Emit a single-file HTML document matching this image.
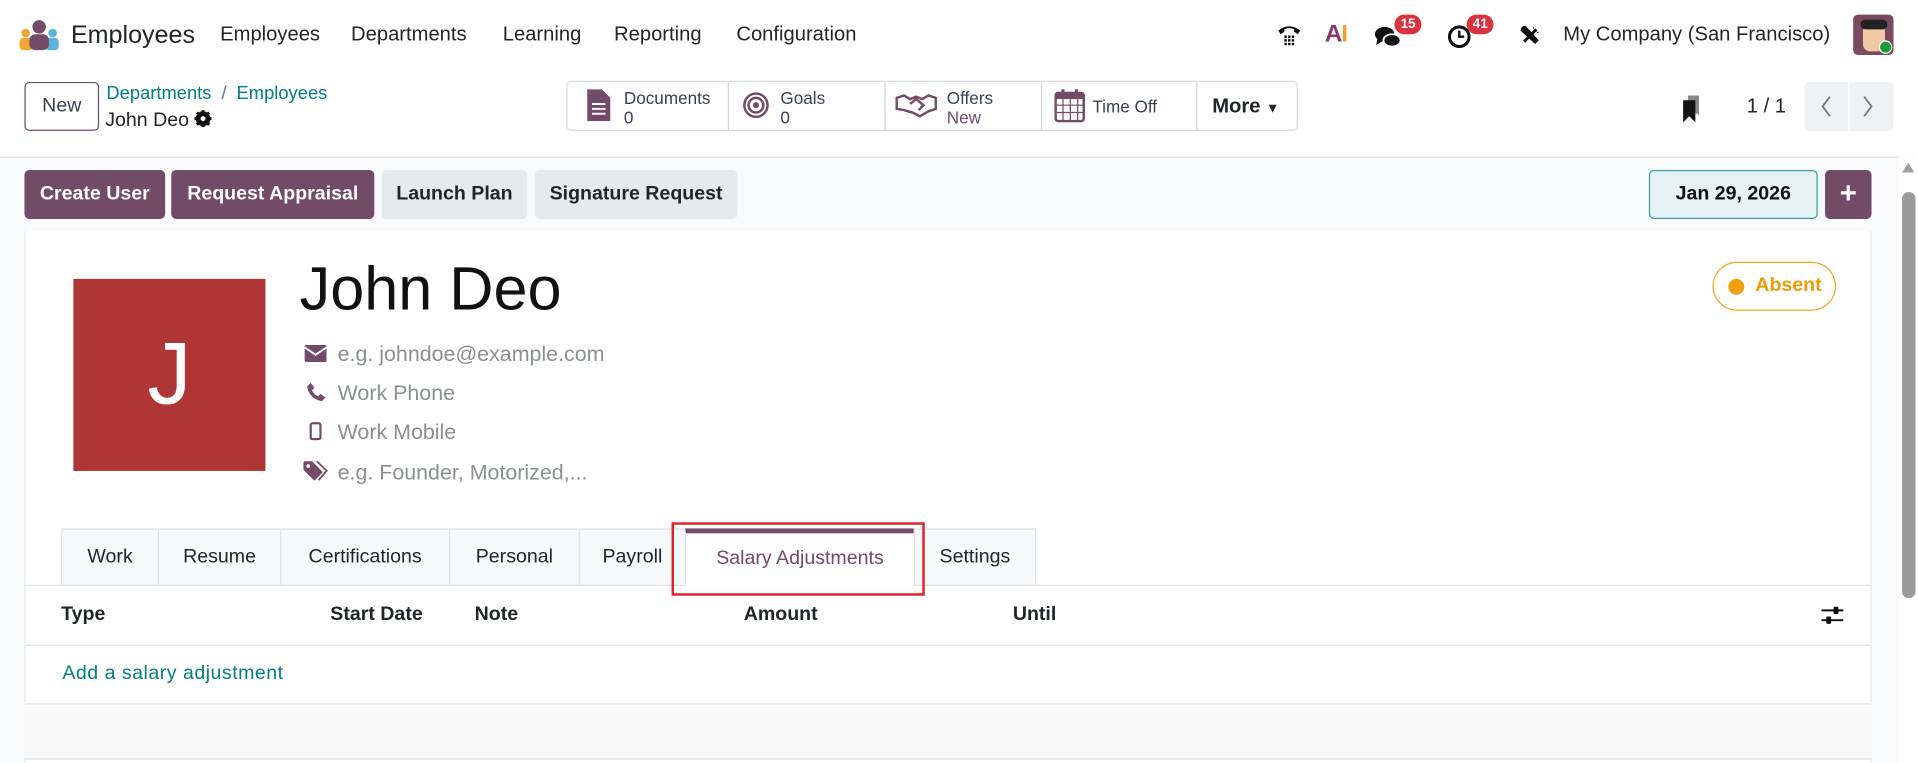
<!DOCTYPE html>
<html><head><meta charset="utf-8"><style>
*{box-sizing:border-box;margin:0;padding:0}
html,body{width:1918px;height:763px;overflow:hidden;background:#fff;font-family:"Liberation Sans",sans-serif;color:#212529}
#w{width:1568px;height:624px;transform:scale(1.22321);transform-origin:0 0;position:relative}
.a{position:absolute;white-space:nowrap}
.nav{font-size:16.5px;top:19px}
.badge{position:absolute;background:#d9333f;color:#fff;font-size:11px;border-radius:10px;padding:2px 5px;font-weight:bold}
.sb{position:absolute;top:66px;height:41px;border:1px solid #d8dadd;background:#fff;font-size:14px;line-height:16px;color:#374151}
.btn{position:absolute;top:139px;height:40px;border-radius:4px;font-size:16px;font-weight:bold;line-height:40px;text-align:center}
.p{background:#714b67;color:#fff}.g{background:#e7e9ed;color:#212529}
.tab{position:absolute;top:432px;height:47px;border:1px solid #dee2e6;background:#f8f9fa;font-size:16px;line-height:46px;text-align:center;color:#212529}
.fld{position:absolute;left:276px;font-size:17.5px;color:#8a8f94}
.th{position:absolute;top:494px;font-size:16px;font-weight:bold}
</style></head><body><div id="w">
<svg class="a" style="left:15px;top:16px" width="34" height="26" viewBox="0 0 34 26"><circle cx="17" cy="6" r="5.5" fill="#714b67"/><circle cx="6" cy="11" r="3.5" fill="#f3a62f"/><circle cx="28" cy="11" r="3.5" fill="#5ab4de"/><rect x="1" y="15" width="11" height="10" rx="3" fill="#f3a62f"/><rect x="22" y="15" width="11" height="10" rx="3" fill="#5ab4de"/><rect x="9" y="12" width="16" height="13" rx="5" fill="#714b67"/></svg>
<div class="a" style="left:58px;top:17px;font-size:20.5px">Employees</div>
<div class="a nav" style="left:180px">Employees</div>
<div class="a nav" style="left:287px">Departments</div>
<div class="a nav" style="left:411px">Learning</div>
<div class="a nav" style="left:502px">Reporting</div>
<div class="a nav" style="left:602px">Configuration</div>
<svg class="a" style="left:1043px;top:18px" width="22" height="22" viewBox="0 0 22 22"><path d="M2 7Q11 0 20 7L18 10 15 8V6Q11 4 7 6V8L4 10Z" fill="#111"/><g fill="#111"><rect x="7" y="11" width="2" height="2"/><rect x="10" y="11" width="2" height="2"/><rect x="13" y="11" width="2" height="2"/><rect x="7" y="14" width="2" height="2"/><rect x="10" y="14" width="2" height="2"/><rect x="13" y="14" width="2" height="2"/><rect x="7" y="17" width="2" height="2"/><rect x="10" y="17" width="2" height="2"/><rect x="13" y="17" width="2" height="2"/></g></svg>
<div class="a" style="left:1083px;top:17px;font-size:20px;font-weight:bold;color:#c0622a;letter-spacing:-1px"><span style="color:#8a3a6a">A</span><span style="color:#f0a030">I</span></div>
<svg class="a" style="left:1123px;top:20px" width="24" height="20" viewBox="0 0 24 20"><ellipse cx="9" cy="8" rx="8" ry="6" fill="#111"/><path d="M3 12L2 17 8 13Z" fill="#111"/><ellipse cx="15" cy="13" rx="7" ry="5" fill="#111" stroke="#fff" stroke-width="1.5"/></svg>
<div class="badge" style="left:1140px;top:12px">15</div>
<svg class="a" style="left:1183px;top:19px" width="22" height="22" viewBox="0 0 22 22"><circle cx="10" cy="11" r="8" fill="none" stroke="#111" stroke-width="2.5"/><path d="M10 6V11H14" stroke="#111" stroke-width="2" fill="none"/></svg>
<div class="badge" style="left:1199px;top:12px">41</div>
<svg class="a" style="left:1241px;top:19px" width="20" height="20" viewBox="0 0 20 20"><path d="M5 15L15 5" stroke="#111" stroke-width="2.4"/><path d="M13 2A4 4 0 0 0 18 7L16 8 12 4Z" fill="#111"/><path d="M3 3L6 2 17 14 14 17 2 6Z" fill="#111"/></svg>
<div class="a" style="left:1278px;top:19px;font-size:16.5px">My Company (San Francisco)</div>
<div class="a" style="left:1515px;top:12px;width:33px;height:33px;border-radius:4px;background:#7a4a5e;overflow:hidden"><div style="position:absolute;left:8px;top:8px;width:18px;height:22px;background:#f1c9a5;border-radius:6px"></div><div style="position:absolute;left:6px;top:4px;width:22px;height:8px;background:#222;border-radius:4px"></div></div>
<div class="a" style="left:1536px;top:33px;width:11px;height:11px;border-radius:50%;background:#1a9a3a;border:1.5px solid #fff"></div>
<div class="a" style="left:20px;top:67px;width:61px;height:40px;border:1px solid #714b67;border-radius:4px;font-size:16px;line-height:38px;text-align:center;color:#374151">New</div>
<div class="a" style="left:87px;top:68px;font-size:15px;color:#017e84">Departments <span style="color:#6c757d;margin:0 4px">/</span> Employees</div>
<div class="a" style="left:86px;top:90px;font-size:16px">John Deo <svg width="14" height="14" viewBox="0 0 14 14" style="vertical-align:-1px"><circle cx="7" cy="7" r="4.5" fill="none" stroke="#111" stroke-width="3"/><path d="M7 0V14M0 7H14M2 2L12 12M12 2L2 12" stroke="#111" stroke-width="2.5"/><circle cx="7" cy="7" r="2" fill="#fff"/></svg></div>
<div class="sb" style="left:463px;width:133px;border-radius:4px 0 0 4px"><svg class="a" style="left:16px;top:6px" width="19" height="26" viewBox="0 0 19 26"><path d="M0 0H12L19 7V26H0Z" fill="#714b67"/><path d="M4 12H15M4 16H15M4 20H15" stroke="#fff" stroke-width="1.6"/></svg><div class="a" style="left:46px;top:5px">Documents<br>0</div></div>
<div class="sb" style="left:595px;width:129px"><svg class="a" style="left:11px;top:8px" width="22" height="22" viewBox="0 0 22 22"><circle cx="11" cy="11" r="9.5" fill="none" stroke="#714b67" stroke-width="2"/><circle cx="11" cy="11" r="6" fill="none" stroke="#714b67" stroke-width="2"/><circle cx="11" cy="11" r="2.5" fill="#714b67"/></svg><div class="a" style="left:42px;top:5px">Goals<br>0</div></div>
<div class="sb" style="left:723px;width:129px"><svg class="a" style="left:8px;top:9px" width="34" height="20" viewBox="0 0 34 20"><path d="M1 4L7 2 12 5 17 3 22 5 27 2 33 4V13L27 15 20 19 14 16 7 14 1 13Z" fill="none" stroke="#714b67" stroke-width="2"/><path d="M12 9L17 5 23 10 19 14" fill="none" stroke="#714b67" stroke-width="2"/></svg><div class="a" style="left:50px;top:5px">Offers<br><span style="color:#714b67">New</span></div></div>
<div class="sb" style="left:851px;width:128px"><svg class="a" style="left:10px;top:5px" width="25" height="28" viewBox="0 0 25 28"><rect x="1" y="4" width="23" height="23" rx="2" fill="none" stroke="#714b67" stroke-width="2"/><rect x="1" y="4" width="23" height="5" fill="#714b67"/><path d="M7 1V6M18 1V6" stroke="#714b67" stroke-width="2.5"/><path d="M1 14H24M1 20H24M7 9V27M13 9V27M19 9V27" stroke="#714b67" stroke-width="1"/></svg><div class="a" style="left:41px;top:12px">Time Off</div></div>
<div class="sb" style="left:978px;width:83px;border-radius:0 4px 4px 0;font-size:16.5px;font-weight:bold;color:#212529"><div class="a" style="left:12px;top:12px">More <span style="font-size:11px">▼</span></div></div>
<svg class="a" style="left:1375px;top:78px" width="18" height="22" viewBox="0 0 18 22"><path d="M5 0H14V16L5 11Z" fill="#888"/><path d="M1 4H11V22L6 17 1 22Z" fill="#111"/></svg>
<div class="a" style="left:1428px;top:78px;font-size:16.5px">1 / 1</div>
<div class="a" style="left:1475px;top:67px;width:73px;height:40px;background:#f0f1f3;border-radius:4px"></div>
<div class="a" style="left:1511px;top:67px;width:1px;height:40px;background:#fff"></div>
<svg class="a" style="left:1485px;top:77px" width="54" height="20" viewBox="0 0 54 20"><path d="M11 2L5 10 11 18M39 2L45 10 39 18" stroke="#777" stroke-width="1.5" fill="none"/></svg>
<div class="a" style="left:0;top:128px;width:1568px;height:496px;background:#f9fafb;border-top:1px solid #dcdfe3"></div>
<div class="btn p" style="left:20px;width:115px">Create User</div>
<div class="btn p" style="left:140px;width:166px">Request Appraisal</div>
<div class="btn g" style="left:312px;width:119px">Launch Plan</div>
<div class="btn g" style="left:437px;width:166px">Signature Request</div>
<div class="btn" style="left:1348px;width:138px;background:#e6f2f3;border:1.5px solid #3aa0a6;color:#111;line-height:37px">Jan 29, 2026</div>
<div class="btn p" style="left:1492px;width:38px;font-size:24px">+</div>
<div class="a" style="left:20px;top:189px;width:1510px;height:435px;background:#fff;border-left:1px solid #e6e8eb;border-right:1px solid #e6e8eb"></div>
<div class="a" style="left:60px;top:228px;width:157px;height:157px;background:#b03535;color:#fff;font-size:72px;text-align:center;line-height:157px">J</div>
<div class="a" style="left:245px;top:207px;font-size:50px;color:#111">John Deo</div>
<svg class="a" style="left:249px;top:282px" width="18" height="14" viewBox="0 0 18 14"><rect width="18" height="14" rx="1.5" fill="#714b67"/><path d="M0 2L9 8 18 2" stroke="#fff" stroke-width="1.6" fill="none"/></svg>
<div class="fld" style="top:279px">e.g. johndoe@example.com</div>
<svg class="a" style="left:250px;top:313px" width="16" height="16" viewBox="0 0 16 16"><path d="M1 3L4 0 7 4 5 6Q7 10 10 11L12 9 16 12 13 15Q3 13 1 3Z" fill="#714b67"/></svg>
<div class="fld" style="top:311px">Work Phone</div>
<svg class="a" style="left:253px;top:345px" width="10" height="15" viewBox="0 0 10 15"><rect x="1" y="1" width="8" height="13" rx="1.5" fill="none" stroke="#714b67" stroke-width="1.8"/></svg>
<div class="fld" style="top:343px">Work Mobile</div>
<svg class="a" style="left:248px;top:377px" width="22" height="17" viewBox="0 0 22 17"><path d="M0 1V7L9 16 16 9 7 0H1Z" fill="#714b67"/><path d="M10 0H12L20 8 13 16 12 15 18 8Z" fill="#714b67"/><circle cx="4" cy="4" r="1.5" fill="#fff"/></svg>
<div class="fld" style="top:376px">e.g. Founder, Motorized,...</div>
<div class="a" style="left:1400px;top:214px;width:101px;height:40px;border:1px solid #f0a81f;border-radius:20px;font-size:16px;font-weight:bold;color:#e99d00;line-height:38px;padding-left:34px">Absent</div>
<div class="a" style="left:1413px;top:228px;width:13px;height:13px;border-radius:50%;background:#eca00d"></div>
<div class="a" style="left:20px;top:478px;width:1510px;height:1px;background:#dee2e6"></div>
<div class="tab" style="left:50px;width:80px">Work</div>
<div class="tab" style="left:129px;width:101px">Resume</div>
<div class="tab" style="left:229px;width:139px">Certifications</div>
<div class="tab" style="left:367px;width:107px">Personal</div>
<div class="tab" style="left:473px;width:88px">Payroll</div>
<div class="tab" style="left:560px;width:188px;background:#fff;border-bottom-color:#fff;color:#714b67;border-top:4px solid #714b67;line-height:42px">Salary Adjustments</div>
<div class="tab" style="left:747px;width:100px">Settings</div>
<div class="a" style="left:549px;top:427px;width:207px;height:60px;border:2px solid #e41e26"></div>
<div class="th" style="left:50px">Type</div>
<div class="th" style="left:270px">Start Date</div>
<div class="th" style="left:388px">Note</div>
<div class="th" style="left:608px">Amount</div>
<div class="th" style="left:828px">Until</div>
<svg class="a" style="left:1489px;top:495px" width="18" height="16" viewBox="0 0 18 16"><path d="M0 4H18M0 12H18" stroke="#111" stroke-width="1.6"/><rect x="10" y="1" width="4" height="6" rx="1" fill="#111"/><rect x="4" y="9" width="4" height="6" rx="1" fill="#111"/></svg>
<div class="a" style="left:20px;top:527px;width:1510px;height:1px;background:#dee2e6"></div>
<div class="a" style="left:51px;top:542px;font-size:16px;color:#017e84;letter-spacing:0.4px">Add a salary adjustment</div>
<div class="a" style="left:20px;top:575px;width:1510px;height:46px;background:#f9f9f9;border-top:1px solid #dee2e6;border-bottom:1px solid #dee2e6"></div>
<div class="a" style="left:1552px;top:128px;width:16px;height:496px;background:#fff"></div>
<svg class="a" style="left:1554px;top:132px" width="12" height="10" viewBox="0 0 12 10"><path d="M6 1L11 9H1Z" fill="#a0a0a0"/></svg>
<div class="a" style="left:1555px;top:157px;width:11px;height:332px;background:#9a9a9a;border-radius:6px"></div>
</div></body></html>
